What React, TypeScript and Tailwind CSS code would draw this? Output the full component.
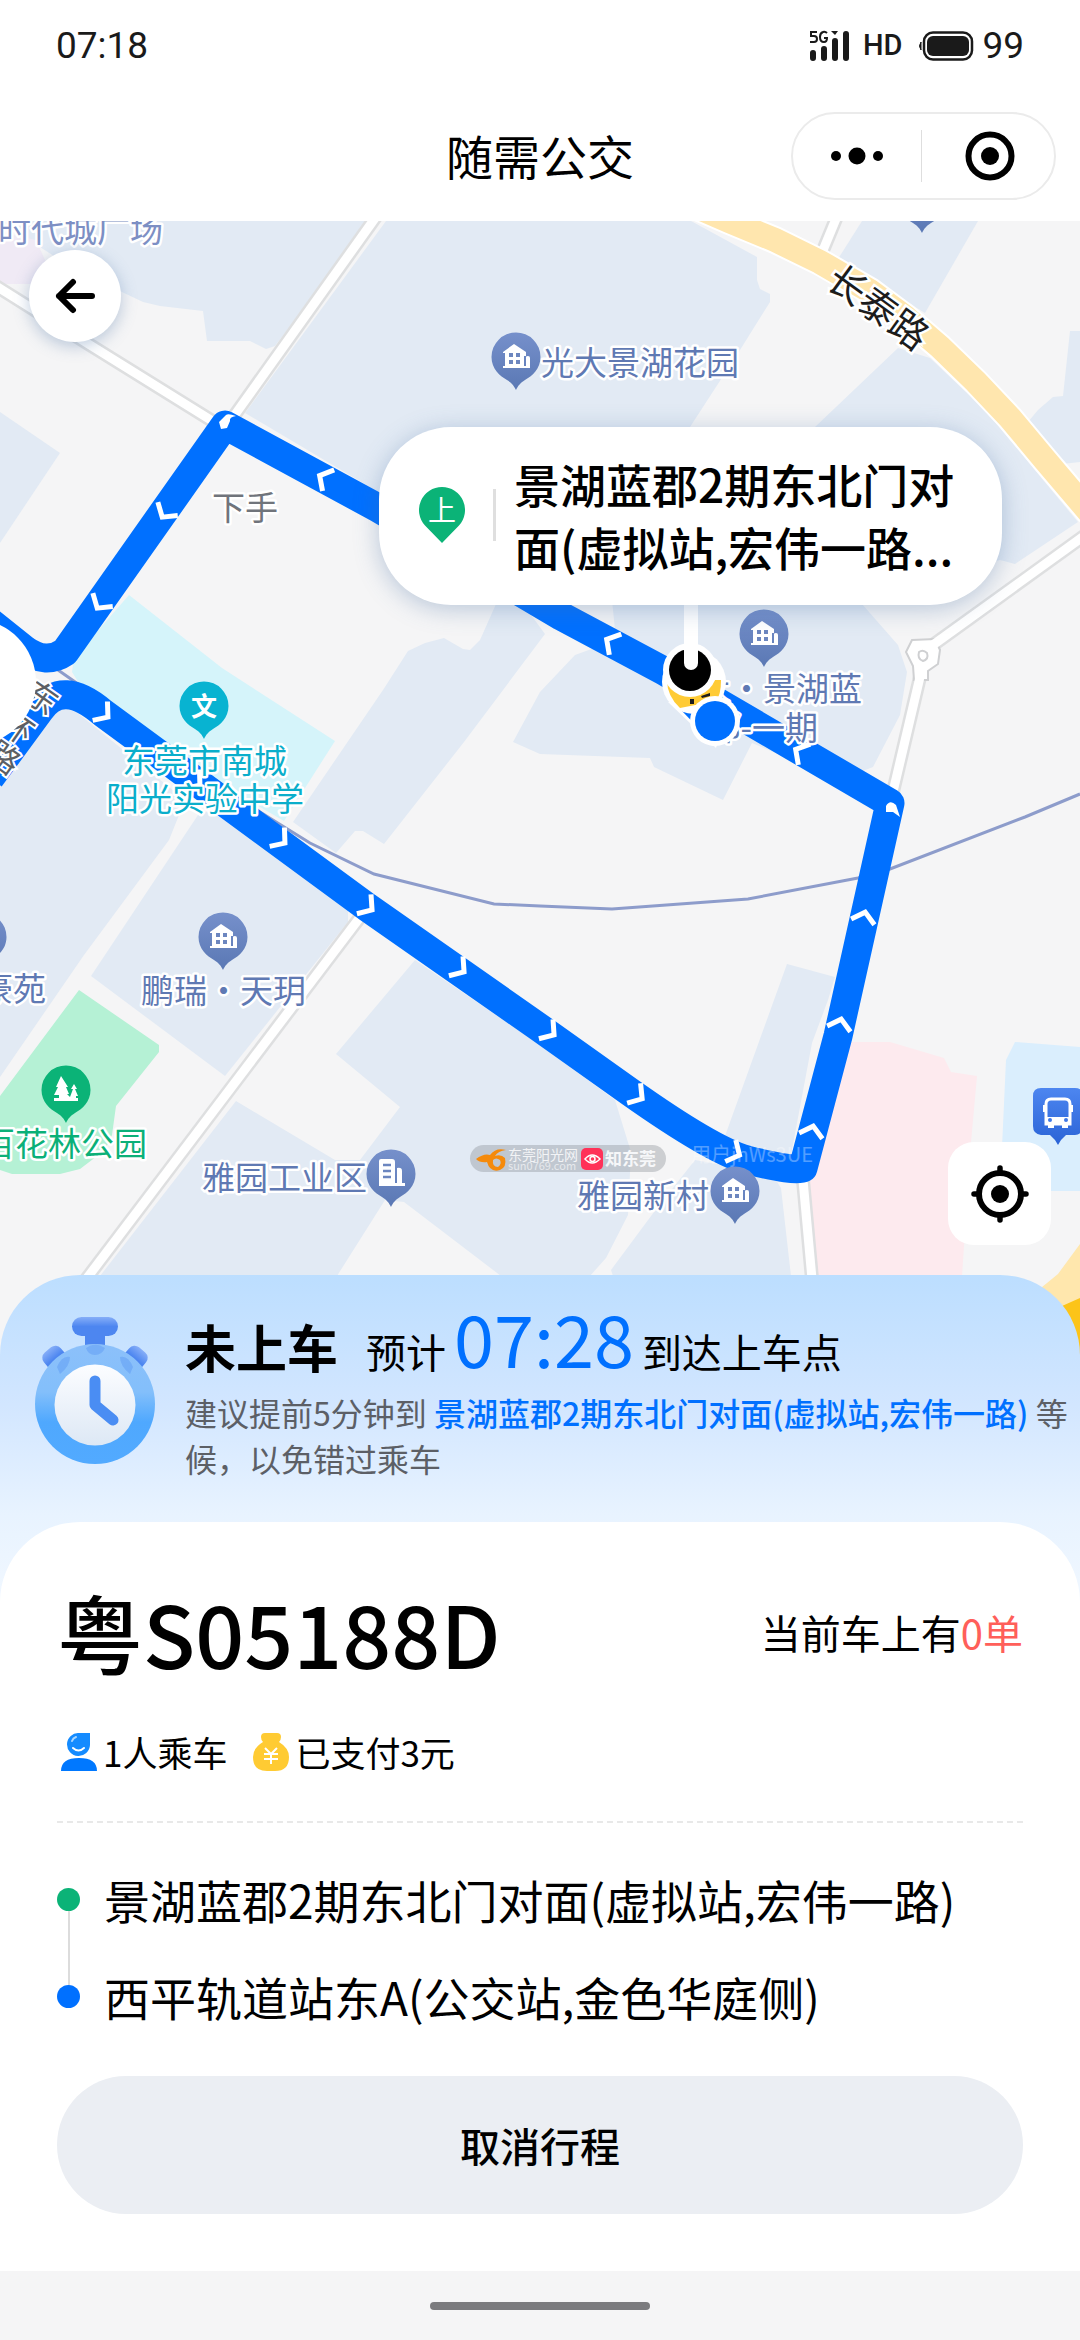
import type { ReactNode } from "react";

type Point = [number, number];

const BLOCKS = [
  "0,221 370,221 275,346 266,349 250,341 207,341 203,311 160,306 143,302 122,292 60,260",
  "386,221 691,221 757,257 757,280 760,289 770,294 770,302 740,350 690,427 640,500 400,505 245,413",
  "862,221 978,221 925,313 838,259",
  "1070,331 1063,396 1053,397 1038,410 1028,422 1048,450 1062,464 1080,462 1080,331",
  "815,427 898,348 930,358 985,410 1078,522 1015,564 1000,560 900,590 790,500",
  "0,412 60,453 0,543",
  "496,604 480,640 470,650 463,649 444,638 425,643 408,651 383,690 293,822 336,853 355,831 363,831 384,844 464,742 545,634 520,600",
  "612,600 862,604 898,645 907,672 900,715 873,767 840,780 752,743 723,800 654,767 650,758 540,754 513,742 540,692 575,655 616,640",
  "0,780 45,720 62,700 80,715 185,800 169,840 84,955 0,1077",
  "200,812 91,976 225,1076 348,922 348,908 220,812",
  "236,1101 335,1160 360,1160 400,1107 336,1054 415,960 540,1045 615,1100 631,1152 628,1215 606,1258 590,1276 501,1276 404,1202 385,1200 337,1276 100,1276",
  "654,1212 695,1160 772,1174 781,1188 791,1276 613,1276 611,1270",
  "787,964 835,977 828,1000 812,1043 791,1155 780,1160 725,1136",
];

const ROADS = [
  "-4,286 90,345 214,422",
  "378,214 234,416",
  "838,214 819,260",
  "1084,536 926,650",
  "924,660 892,796",
  "361,916 84,1282",
  "803,1180 813,1290",
];

const ARROWS: [number, number, number][] = [
  [165, 513, 124],
  [100, 604, 124],
  [324, 478, 209],
  [104, 714, 38],
  [196, 782, 38],
  [281, 840, 38],
  [368, 907, 36],
  [460, 969, 36],
  [550, 1032, 36],
  [638, 1096, 34],
  [735, 1153, 26],
  [812, 1131, 284],
  [840, 1024, 284],
  [864, 917, 284],
  [800, 752, 210],
  [611, 642, 210],
];

const PINS: { at: Point; kind: "house" | "office" }[] = [
  { at: [922, 200], kind: "house" },
  { at: [516, 357], kind: "house" },
  { at: [764, 634], kind: "house" },
  { at: [223, 937], kind: "house" },
  { at: [-18, 937], kind: "house" },
  { at: [735, 1191], kind: "house" },
  { at: [391, 1174], kind: "office" },
];

const PIN_PATH =
  "M0-24.5A24.5 24.5 0 0 1 24.5 0C24.5 12 16 19 9 23C4 26 2 29 0 33C-2 29-4 26-9 23C-16 19-24.5 12-24.5 0A24.5 24.5 0 0 1 0-24.5Z";

function HouseGlyph() {
  return (
    <>
      <path
        d="M-13-5L-2-13L10-5V-1H8V9H10V0Q10-1 12-1Q14-1 14 1V11H-13V9H-11V-4H-13Z"
        fill="#fff"
      />
      <path d="M-7-4h4v4h-4zM0-4h4v4h-4zM-7 3h4v4h-4zM0 3h4v4h-4z" fill="#6c86bf" />
    </>
  );
}

function OfficeGlyph() {
  return (
    <>
      <path
        d="M-12 11V-13Q-12-15-10-15H1Q4-15 4-12V9H6V-6Q11-7 11-3V9H14V12H-12Z"
        fill="#fff"
      />
      <path d="M-8-9H0M-8-3H0M-8 3H0" stroke="#6c86bf" strokeWidth="2.5" />
    </>
  );
}

function MapLabel({
  x,
  y,
  color = "#5f79b3",
  anchor = "start",
  children,
}: {
  x: number;
  y: number;
  color?: string;
  anchor?: "start" | "end";
  children: ReactNode;
}) {
  return (
    <text
      x={x}
      y={y}
      fill={color}
      textAnchor={anchor}
      className="text-[33px]"
      stroke="#fff"
      strokeWidth="5"
      strokeLinejoin="round"
      paintOrder="stroke"
    >
      {children}
    </text>
  );
}

function CityMap() {
  return (
    <svg
      className="block h-full w-full"
      viewBox="0 221 1080 1150"
      preserveAspectRatio="xMinYMin slice"
      role="img"
      aria-label="路线地图"
    >
      <defs>
        <linearGradient id="pin" x1="0" y1="0" x2="0" y2="1">
          <stop offset="0" stopColor="#7690cb" />
          <stop offset="1" stopColor="#5a78b4" />
        </linearGradient>
        <linearGradient id="busPin" x1="0" y1="0" x2="0" y2="1">
          <stop offset="0" stopColor="#4d86f0" />
          <stop offset="1" stopColor="#2a63d6" />
        </linearGradient>
      </defs>

      <rect y="221" width="1080" height="1150" fill="#f5f5f6" />
      {BLOCKS.map((points) => (
        <polygon key={points} points={points} fill="#e2eaf4" />
      ))}
      <polygon points="0,232 36,240 46,262 60,284 0,284" fill="#f0eaf5" />
      <polygon
        points="129,595 222,668 335,741 284,821 180,760 80,685 72,672 74,658"
        fill="#d5f4fa"
      />
      <polygon
        points="79,990 159,1045 159,1052 116,1106 112,1135 105,1150 80,1169 60,1174 12,1174 0,1170 0,1096"
        fill="#b5f1d5"
      />
      <polygon
        points="850,1042 890,1042 944,1058 951,1072 977,1076 971,1142 962,1276 818,1276 805,1170"
        fill="#fdeaee"
      />
      <polygon
        points="1015,1042 1080,1047 1080,1191 1000,1191 1006,1060"
        fill="#daeefd"
      />
      <polygon points="1080,1244 1058,1274 1036,1292 1080,1350" fill="#ffe7ad" />
      <polygon points="1062,1306 1080,1298 1080,1360" fill="#fcc419" />

      {/* roads: grey casing under a white core */}
      <g fill="none" stroke="#dedfe0" strokeWidth="14">
        {ROADS.map((points) => (
          <polyline key={points} points={points} />
        ))}
      </g>
      <path
        d="M912 640L935 639L940 650L938 664L928 671V680H914L913 666L906 652Z"
        fill="#fff"
        stroke="#cfd0d2"
        strokeWidth="2"
      />
      <g fill="none" stroke="#fff" strokeWidth="9">
        {ROADS.map((points) => (
          <polyline key={points} points={points} />
        ))}
      </g>
      <path
        d="M919 652Q923 649 927 653Q929 659 923 661Q917 659 919 652Z"
        fill="#fff"
        stroke="#cfd0d2"
        strokeWidth="2"
      />
      <path
        d="M690 204L729 221L775 240L820 262L870 291L905 317L940 347L976 382L1010 418L1045 460L1090 513"
        fill="none"
        stroke="#fff"
        strokeWidth="28"
      />
      <path
        d="M690 204L729 221L775 240L820 262L870 291L905 317L940 347L976 382L1010 418L1045 460L1090 513"
        fill="none"
        stroke="#ffe6ae"
        strokeWidth="24"
      />
      <polyline
        points="58,670 207,774 260,812 310,843 374,874 494,904 540,906 612,909 748,899 858,878 890,869 1025,817 1080,794"
        fill="none"
        stroke="#8d9ccb"
        strokeWidth="3"
      />

      {/* bus route */}
      <g
        fill="none"
        stroke="#0070ff"
        strokeWidth="29"
        strokeLinejoin="round"
      >
        <path d="M-10 622L25 650Q46 665 65 652L225 425L378 508L561 616L664 671L890 803L838 1036L803 1168Q796 1172 747 1160Q712 1150 630 1092L540 1028L367 907L103 713Q62 678 40 710L-10 778" />
      </g>
      <g
        fill="none"
        stroke="#fff"
        strokeWidth="5"
        strokeLinejoin="miter"
      >
        {ARROWS.map(([x, y, angle]) => (
          <path
            key={`${x}-${y}`}
            d="M-5-12L5 0L-5 12"
            transform={`translate(${x} ${y}) rotate(${angle})`}
          />
        ))}
      </g>
      <path d="M219 422L226 415Q228 413 236 416Q229 417 230 421L227 428L221 429Z" fill="#fff" />
      <path d="M886 806Q890 799 896 805L900 817L893 812H886Z" fill="#fff" />

      {/* place names */}
      <MapLabel x={-2} y={242} color="#7d8fc4">时代城广场</MapLabel>
      <MapLabel x={541} y={375}>光大景湖花园</MapLabel>
      <MapLabel x={212} y={520} color="#70747b">下手</MapLabel>
      <MapLabel x={122} y={773} color="#0aaecb">东莞市南城</MapLabel>
      <MapLabel x={106} y={811} color="#0aaecb">阳光实验中学</MapLabel>
      <MapLabel x={141} y={1003}>鹏瑞・天玥</MapLabel>
      <MapLabel x={46} y={1001} anchor="end">豪苑</MapLabel>
      <MapLabel x={147} y={1156} color="#0bb078" anchor="end">百花林公园</MapLabel>
      <MapLabel x={202} y={1190}>雅园工业区</MapLabel>
      <MapLabel x={577} y={1208}>雅园新村</MapLabel>
      <MapLabel x={862} y={701} anchor="end">大・景湖蓝</MapLabel>
      <MapLabel x={818} y={740} anchor="end">郡-一期</MapLabel>
      <text
        transform="translate(824 285) rotate(36)"
        className="text-[38px]"
        fill="#1c1c1c"
        stroke="#fff"
        strokeWidth="5"
        paintOrder="stroke"
      >
        长泰路
      </text>
      <g fill="#5c5f64" stroke="#fff" strokeWidth="4" paintOrder="stroke" className="text-[32px]">
        <text transform="translate(22 698) rotate(35)">东</text>
        <text transform="translate(-3 728) rotate(35)">环</text>
        <text transform="translate(-16 758) rotate(35)">路</text>
      </g>

      {PINS.map(({ at, kind }) => (
        <g key={at.join()} transform={`translate(${at[0]} ${at[1]})`}>
          <path d={PIN_PATH} fill="url(#pin)" />
          {kind === "house" ? <HouseGlyph /> : <OfficeGlyph />}
        </g>
      ))}
      <g transform="translate(204 706)">
        <path d={PIN_PATH} fill="#08b3d1" />
        <text x="-13" y="10" fill="#fff" className="text-[26px] font-bold">
          文
        </text>
      </g>
      <g transform="translate(66 1090)">
        <path d={PIN_PATH} fill="#0bb377" />
        <path
          d="M-5-14L2-3H0L3 4H1L4 7L7-1H5L8-6L11-1L9-1L12 6H10V8H12V11H-12V8H-7V5H-12L-8-3H-10Z"
          fill="#fff"
        />
      </g>
      <g transform="translate(1058 1112)">
        <path
          d="M-17-24H17Q25-24 25-16V14Q25 22 17 23H8Q3 27 0 33Q-3 27-8 23H-17Q-25 22-25 14V-16Q-25-24-17-24Z"
          fill="url(#busPin)"
        />
        <path
          d="M-12-8Q-12-13-7-13H7Q12-13 12-8V12H-12Z"
          fill="none"
          stroke="#fff"
          strokeWidth="3"
        />
        <path d="M-12 5H12V12H-12ZM-10 12h6v4h-6zM4 12h6v4h-6zM-15-7h3v7h-3zM12-7h3v7h-3z" fill="#fff" />
        <circle cx="-8" cy="8" r="2" fill="#3f78e6" />
        <circle cx="8" cy="8" r="2" fill="#3f78e6" />
      </g>

      {/* vehicle, passenger and pick-up markers */}
      <path d="M668 702L716 748L730 704Z" fill="#fff" />
      <path d="M682 711L712 742L716 704Z" fill="#0070ff" />
      <circle cx="694" cy="682" r="32" fill="#fff" />
      <path d="M667 680H721Q721 695 716 701L680 708Q667 696 667 680Z" fill="#ffcb35" />
      <path d="M690 699h4v5h-4zM701 696l9-3v3l-8 2z" fill="#1d1d1d" />
      <circle cx="690" cy="670" r="27" fill="#fff" />
      <circle cx="690" cy="670" r="21" fill="#000" />
      <path d="M691 600V663" stroke="#fff" strokeWidth="14" strokeLinecap="round" />
      <circle cx="715" cy="721" r="25" fill="#fff" />
      <circle cx="715" cy="721" r="20" fill="#0070ff" />
      <circle cx="-27" cy="682" r="63" fill="#fff" />

      {/* photo credit badge */}
      <rect x="470" y="1145" width="196" height="27" rx="13.5" fill="#8f949b" opacity="0.4" />
      <path
        d="M476 1159Q484 1153 490 1155Q496 1147 506 1150Q498 1151 495 1156Q501 1154 505 1158Q507 1167 500 1170Q490 1173 487 1162Q480 1163 476 1159ZM493 1160Q492 1167 498 1167Q502 1164 500 1160Q496 1157 493 1160Z"
        fill="#f58a0b"
        fillRule="evenodd"
      />
      <text x="508" y="1160" fill="#f3f4f6" className="text-[14px]">东莞阳光网</text>
      <text x="508" y="1170" fill="#e6e9ed" className="text-[11px]">sun0769.com</text>
      <rect x="581" y="1148" width="22" height="22" rx="5" fill="#ff3158" />
      <path d="M585 1159Q592 1151 600 1159Q592 1167 585 1159Z" fill="none" stroke="#fff" strokeWidth="1.5" />
      <circle cx="592.5" cy="1159" r="2.5" fill="none" stroke="#fff" strokeWidth="1.5" />
      <text x="605" y="1165" fill="#f6f7f9" className="text-[17px] font-bold">知东莞</text>
      <text x="691" y="1162" fill="#fff" opacity="0.32" className="text-[20px]">用户jnWs3UE</text>
    </svg>
  );
}

function StatusBar() {
  return (
    <div className="flex h-[92px] items-center justify-between px-14 font-[Roboto,sans-serif] text-[37px] text-[#1a1a1a]">
      <span>07:18</span>
      <div className="flex items-center">
        <svg width="42" height="32" viewBox="0 0 42 32" aria-label="5G">
          <path
            d="M8 2H2V6H5Q8 6 8 9Q8 12 5 12H1M18 3Q16 1 14 2Q11 3 11 7Q11 12 15 12Q18 12 18 8H15"
            fill="none"
            stroke="#1a1a1a"
            strokeWidth="2"
          />
          <path d="M4 23V28M15 19V28M26 11V28M37 4V28" stroke="#1a1a1a" strokeWidth="6" strokeLinecap="round" />
          <path d="M22 1H29L26 5Z" fill="#1a1a1a" />
        </svg>
        <span className="ml-3 text-[29px] font-medium">HD</span>
        <svg className="ml-4" width="56" height="30" viewBox="0 0 56 30" aria-hidden="true">
          <path d="M3 11Q0 15 3 19Z" fill="#1a1a1a" stroke="#1a1a1a" />
          <rect x="6" y="1.5" width="48" height="27" rx="9" fill="none" stroke="#1a1a1a" strokeWidth="2.5" />
          <rect x="9" y="5" width="42" height="20" rx="6" fill="#1a1a1a" />
        </svg>
        <span className="ml-2">99</span>
      </div>
    </div>
  );
}

function TitleBar() {
  return (
    <div className="relative flex h-[129px] items-center justify-center pb-1">
      <h1 className="text-[47px] leading-[64px]">随需公交</h1>
      <div className="absolute top-5 right-6 flex h-[88px] w-[265px] items-center rounded-full border-2 border-[#ebebeb]">
        <button type="button" aria-label="更多" className="flex flex-1 justify-center">
          <svg width="54" height="20" viewBox="0 0 54 20" aria-hidden="true">
            <circle cx="6" cy="10" r="5" />
            <circle cx="27" cy="10" r="8.5" />
            <circle cx="48" cy="10" r="5" />
          </svg>
        </button>
        <span className="h-[52px] w-px bg-[#dedede]" />
        <button type="button" aria-label="关闭" className="flex flex-1 justify-center pl-1">
          <svg width="50" height="50" viewBox="0 0 50 50" aria-hidden="true">
            <circle cx="25" cy="25" r="21.5" fill="none" stroke="#000" strokeWidth="6" />
            <circle cx="25" cy="25" r="9" />
          </svg>
        </button>
      </div>
    </div>
  );
}

function PickupCallout() {
  return (
    <div className="absolute top-[206px] left-[379px] flex h-[178px] w-[623px] items-center rounded-[72px] bg-white pb-0.5 pl-10 shadow-[0_4px_24px_rgba(70,110,160,0.35)]">
      <svg width="46" height="56" viewBox="0 0 46 56" aria-hidden="true">
        <path
          d="M23 0A23 23 0 0 1 40 38.500L23 56L6 38.500A23 23 0 0 1 23 0Z"
          fill="#0bb377"
        />
        <text x="9" y="34" fill="#fff" className="text-[28px]">
          上
        </text>
      </svg>
      <span className="ml-7 h-[52px] w-[3px] bg-[#dfdfdf]" />
      <p className="ml-[18px] text-[46px] leading-[63px] font-medium whitespace-nowrap">
        景湖蓝郡2期东北门对
        <br />
        面(虚拟站,宏伟一路...
      </p>
    </div>
  );
}

function Stopwatch() {
  return (
    <svg className="mt-[14px] shrink-0" width="126" height="152" viewBox="0 0 126 152" aria-hidden="true">
      <defs>
        <linearGradient id="watchKnob" x1="0" y1="0" x2="0" y2="1">
          <stop offset="0" stopColor="#86aef8" />
          <stop offset="0.5" stopColor="#4d86f0" />
        </linearGradient>
        <linearGradient id="watchBody" x1="0" y1="0" x2="0" y2="1">
          <stop offset="0" stopColor="#8cc0fa" />
          <stop offset="0.4" stopColor="#83bffb" />
          <stop offset="0.65" stopColor="#4fa8fe" />
          <stop offset="1" stopColor="#52aaff" />
        </linearGradient>
        <linearGradient id="watchFace" x1="0" y1="0" x2="0" y2="1">
          <stop offset="0" stopColor="#fcfdff" />
          <stop offset="1" stopColor="#dde8f5" />
        </linearGradient>
      </defs>
      <rect x="53" y="16" width="20" height="20" fill="#4d86f0" />
      <rect x="40" y="4" width="46" height="19" rx="9.500" fill="url(#watchKnob)" />
      <rect x="-11" y="-8" width="22" height="22" rx="7" fill="url(#watchKnob)" transform="translate(21 43) rotate(-40)" />
      <rect x="-11" y="-8" width="22" height="22" rx="7" fill="url(#watchKnob)" transform="translate(105 43) rotate(40)" />
      <circle cx="63" cy="91" r="60" fill="url(#watchBody)" />
      <path d="M54 35Q63 28 73 35Q70 42 63 42Q56 42 54 35ZM25 54Q30 42 38 44Q38 53 28 61ZM101 54Q96 42 88 44Q88 53 98 61Z" fill="#4d8cf2" opacity="0.35" />
      <circle cx="63" cy="92" r="40.500" fill="url(#watchFace)" />
      <path
        d="M63 68V92L81 107"
        fill="none"
        stroke="#4a8df3"
        strokeWidth="11"
        strokeLinecap="round"
        strokeLinejoin="round"
      />
    </svg>
  );
}

function TripNotice() {
  return (
    <div className="flex h-[247px] pt-6 pl-8">
      <Stopwatch />
      <div className="ml-[27px] flex-1">
        <div className="flex items-baseline text-[40px] leading-[76px]">
          <strong className="text-[51px] font-bold">未上车</strong>
          <span className="ml-7">预计</span>
          <time className="ml-2 text-[72px] text-[#0070ff]">07:28</time>
          <span className="ml-2">到达上车点</span>
        </div>
        <p className="text-[32px] leading-[46px] text-[#5c5f66]">
          建议提前5分钟到{" "}
          <span className="font-medium text-[#0070ff]">
            景湖蓝郡2期东北门对面(虚拟站,宏伟一路)
          </span>{" "}
          等候，以免错过乘车
        </p>
      </div>
    </div>
  );
}

function PersonIcon() {
  return (
    <svg width="36" height="38" viewBox="0 0 36 38" aria-hidden="true">
      <path d="M18 0H29V12A11.500 11.500 0 1 1 18 0Z" fill="#148bff" />
      <path d="M0 38Q0 25 18 25Q36 25 36 38Z" fill="#0078ff" />
      <path d="M12 15Q17.500 20 23 15" fill="none" stroke="#fff" strokeWidth="2" strokeLinecap="round" />
      <path d="M11 8Q12 5 15 4" fill="none" stroke="#a9d6ff" strokeWidth="2" strokeLinecap="round" />
    </svg>
  );
}

function MoneyIcon() {
  return (
    <svg width="36" height="38" viewBox="0 0 36 38" aria-hidden="true">
      <path
        d="M12 0H24Q28 0 28 4Q28 7 26 9Q36 15 36 24Q36 38 22 38H14Q0 38 0 24Q0 15 10 9Q8 7 8 4Q8 0 12 0Z"
        fill="#ffcb33"
      />
      <path
        d="M12 15L18 21L24 15M18 21V31M11 21H25M11 26H25"
        fill="none"
        stroke="#fff"
        strokeWidth="2"
      />
    </svg>
  );
}

function TripCard() {
  return (
    <div className="rounded-t-[80px] bg-white px-[57px] pt-[62px] pb-[57px]">
      <div className="flex items-center justify-between">
        <h2 className="text-[86px] leading-[96px] font-medium">粤S05188D</h2>
        <p className="text-[40px] leading-[60px]">
          当前车上有<span className="text-[#ff5f5a]">0单</span>
        </p>
      </div>

      <div className="mt-[48px] flex items-center gap-[26px] pl-1 text-[35px] leading-[48px]">
        <span className="flex items-center gap-1.5">
          <PersonIcon />
          1人乘车
        </span>
        <span className="flex items-center gap-1.5">
          <MoneyIcon />
          已支付3元
        </span>
      </div>

      <hr className="mt-[45px] border-t-2 border-dashed border-[#e8e8e8]" />

      <ol className="mt-[44px] flex flex-col gap-[33px] text-[46px] leading-[64px]">
        <li className="relative flex items-center gap-6">
          <span className="absolute top-8 left-[11px] h-[97px] w-0.5 bg-[#dcdcdc]" />
          <span className="relative size-[23px] rounded-full bg-[#0bb377]" />
          景湖蓝郡2期东北门对面(虚拟站,宏伟一路)
        </li>
        <li className="flex items-center gap-6">
          <span className="relative size-[23px] rounded-full bg-[#0070ff]" />
          西平轨道站东A(公交站,金色华庭侧)
        </li>
      </ol>

      <button
        type="button"
        className="mt-[48px] h-[138px] w-full rounded-full bg-[#ebeef3] text-[40px] font-medium"
      >
        取消行程
      </button>
    </div>
  );
}

export default function App() {
  return (
    <div className="flex min-h-screen flex-col bg-white font-['Noto_Sans_CJK_SC',sans-serif] text-black">
      <header>
        <StatusBar />
        <TitleBar />
      </header>

      <main className="flex flex-1 flex-col">
        <section className="relative min-h-[900px] flex-1 overflow-hidden">
          <div className="absolute inset-0">
            <CityMap />
          </div>
          <button
            type="button"
            aria-label="返回"
            className="absolute top-[29px] left-[29px] flex size-[92px] items-center justify-center rounded-full bg-white shadow-[0_4px_16px_rgba(70,110,160,0.35)]"
          >
            <svg width="42" height="36" viewBox="0 0 42 36" aria-hidden="true">
              <path
                d="M38 18H5M19 4L5 18L19 32"
                fill="none"
                stroke="#000"
                strokeWidth="6"
                strokeLinecap="round"
                strokeLinejoin="round"
              />
            </svg>
          </button>
          <PickupCallout />
          <button
            type="button"
            aria-label="定位"
            className="absolute right-[29px] bottom-[126px] flex size-[103px] items-center justify-center rounded-[26px] bg-white"
          >
            <svg width="58" height="58" viewBox="0 0 58 58" aria-hidden="true">
              <circle cx="29" cy="29" r="21" fill="none" stroke="#000" strokeWidth="6" />
              <circle cx="29" cy="29" r="9" />
              <path
                d="M29 3V8M29 50V55M3 29H8M50 29H55"
                stroke="#000"
                strokeWidth="5.500"
                strokeLinecap="round"
              />
            </svg>
          </button>
        </section>

        <section className="relative -mt-24 rounded-t-[80px] bg-[linear-gradient(#bcdeff_0px,#d2e6ff_130px,#e8f3ff_240px,#f2f8ff_340px)]">
          <TripNotice />
          <TripCard />
        </section>
      </main>

      <footer className="flex h-[69px] items-center justify-center bg-[#f5f5f6]">
        <span className="h-2 w-[220px] rounded-full bg-[#7b7b7e]" />
      </footer>
    </div>
  );
}
